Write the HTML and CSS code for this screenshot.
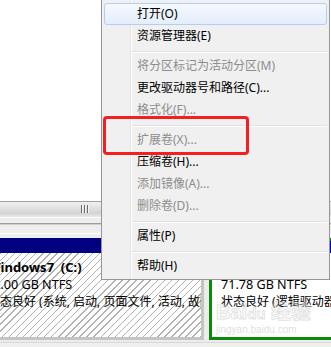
FILE: index.html
```html
<!DOCTYPE html>
<html lang="zh-CN">
<head>
<meta charset="utf-8">
<title>磁盘管理</title>
<link rel="stylesheet" href="styles.css">
</head>
<body>
<div class="screen">
  <div class="volume-list"></div>
  <div class="hscroll"><div class="grip"><i></i><i></i><i></i></div></div>
  <div class="splitter"></div>
  <div class="disk-pane">
    <div class="disk-row">
      <div class="part part-c">
        <div class="part-head"></div>
        <div class="part-body hatch">
          <div class="pname">Windows7&nbsp; (C:)</div>
          <div class="psize">50.00 GB NTFS</div>
          <div class="pstat">状态良好 (系统, 启动, 页面文件, 活动, 故障转储, 主分区)</div>
        </div>
      </div>
      <div class="part part-d">
        <div class="part-head logical"></div>
        <div class="part-body plain">
          <div class="pname">新加卷 (D:)</div>
          <div class="psize">71.78 GB NTFS</div>
          <div class="pstat">状态良好 (逻辑驱动器)</div>
        </div>
        <div class="watermark">
          <div class="wm-logo">Bai<span class="wm-du">du</span> 经验</div>
          <div class="wm-url">jingyan.baidu.com</div>
        </div>
      </div>
    </div>
    <div class="statusbar"></div>
  </div>

  <div class="menu">
    <div class="mi hot">打开(O)</div>
    <div class="mi">资源管理器(E)</div>
    <div class="sep"></div>
    <div class="mi off">将分区标记为活动分区(M)</div>
    <div class="mi">更改驱动器号和路径(C)...</div>
    <div class="mi off">格式化(F)...</div>
    <div class="sep"></div>
    <div class="mi off">扩展卷(X)...</div>
    <div class="mi">压缩卷(H)...</div>
    <div class="mi off">添加镜像(A)...</div>
    <div class="mi off">删除卷(D)...</div>
    <div class="sep"></div>
    <div class="mi">属性(P)</div>
    <div class="sep"></div>
    <div class="mi">帮助(H)</div>
  </div>

  <div class="annot"></div>
</div>
</body>
</html>
```

FILE: styles.css
```css
* { box-sizing: border-box; margin: 0; padding: 0; }
html, body { width: 331px; height: 347px; overflow: hidden; }
body {
  font-family: "Noto Sans", "Noto Sans CJK SC", sans-serif;
  font-size: 12px;
  color: #000;
  background: #eeeeee;
}
.screen {
  position: relative;
  width: 331px;
  height: 347px;
  overflow: hidden;
  display: flex;
  flex-direction: column;
  background: #eeeeee;
}
.volume-list { height: 201px; flex: none; background: #fff; }
.hscroll {
  height: 15px;
  flex: none;
  border-top: 1px solid #a0a0a0;
  background: linear-gradient(#f0f0f0, #e2e2e2 40%, #d3d3d3 80%, #e4e4e4);
  display: flex;
  align-items: center;
  padding-left: 81px;
}
.grip { display: flex; gap: 1px; height: 8px; }
.grip i {
  display: block;
  width: 2px;
  height: 8px;
  background: linear-gradient(90deg, #6e6e6e 50%, #f4f4f4 50%);
}
.splitter {
  height: 22px;
  flex: none;
  background: linear-gradient(#e6e6e6 0 1px, #ffffff 1px 2px, #eeeeee 2px 7px,
    #9c9c9c 7px 8px, #cfcfcf 8px 9px, #eeeeee 9px 17px, #ffffff 17px 18px, #eeeeee 18px);
}
.disk-pane { flex: 1; display: flex; flex-direction: column; background: #ececec; }
.disk-row { height: 102px; flex: none; display: flex; gap: 5px; }
.part { display: flex; flex-direction: column; flex: none; }
.part-c { width: 225px; margin-left: -21px; }
.part-d {
  position: relative;
  width: 200px;
  border: 3px solid #0a8a0a;
}
.part-head { height: 15px; background: #000080; flex: none; }
.part-head.logical { height: 12px; background: #0000c8; }
.part-body {
  flex: 1;
  padding: 6px 0 0 9px;
  line-height: 17px;
  white-space: nowrap;
  overflow: hidden;
}
.hatch {
  border-right: 3px solid #c4c4c4;
  border-bottom: 3px solid #c4c4c4;
  background: repeating-linear-gradient(135deg, #b0b0b0 0 1px, #ffffff 1px 5px);
}
.plain { background: #fff; }
.pname { font-weight: bold; font-size: 13px; }
.psize { font-size: 12.6px; }
.part-c .psize { margin-left: -2px; }
.watermark {
  position: absolute;
  left: 4px;
  top: 60px;
  white-space: nowrap;
  pointer-events: none;
}
.wm-logo {
  font-family: "Liberation Sans", "Noto Sans CJK SC", sans-serif;
  font-weight: bold;
  font-size: 20px;
  line-height: 22px;
  color: rgba(255, 255, 255, 0.4);
  -webkit-text-stroke: 1px rgba(180, 180, 180, 0.4);
}
.wm-du { font-size: 15px; }
.wm-url {
  font-family: "Liberation Sans", sans-serif;
  font-size: 10px;
  line-height: 10px;
  color: rgba(180, 180, 180, 0.45);
}
.statusbar { flex: 1; margin-top: 2px; border-top: 1px solid #d8d8d8; background: #efefef; }

.menu {
  position: absolute;
  left: 101px;
  top: -1px;
  width: 229px;
  background: #f0f0f0;
  border: 1px solid #979797;
  padding: 3px 2px 2px 2px;
}
.menu::before {
  content: "";
  position: absolute;
  left: 28px;
  top: 0;
  bottom: 0;
  width: 2px;
  background: linear-gradient(90deg, #e2e3e3 50%, #ffffff 50%);
}
.mi {
  height: 22px;
  line-height: 20px;
  padding-left: 32px;
  border: 1px solid transparent;
  border-radius: 3px;
  white-space: nowrap;
}
.mi.hot {
  position: relative;
  border-color: #aecff7;
  background: linear-gradient(#f5f9fe, #e4edfa);
}
.mi.off { color: #8d8d8d; }
.sep {
  margin: 4px 0 2px 28px;
  border-top: 1px solid #e0e0e0;
  border-bottom: 1px solid #ffffff;
}
.annot {
  position: absolute;
  left: 103px;
  top: 116px;
  width: 146px;
  height: 39px;
  border: 3px solid #f41f1f;
  border-radius: 4px;
}
```
